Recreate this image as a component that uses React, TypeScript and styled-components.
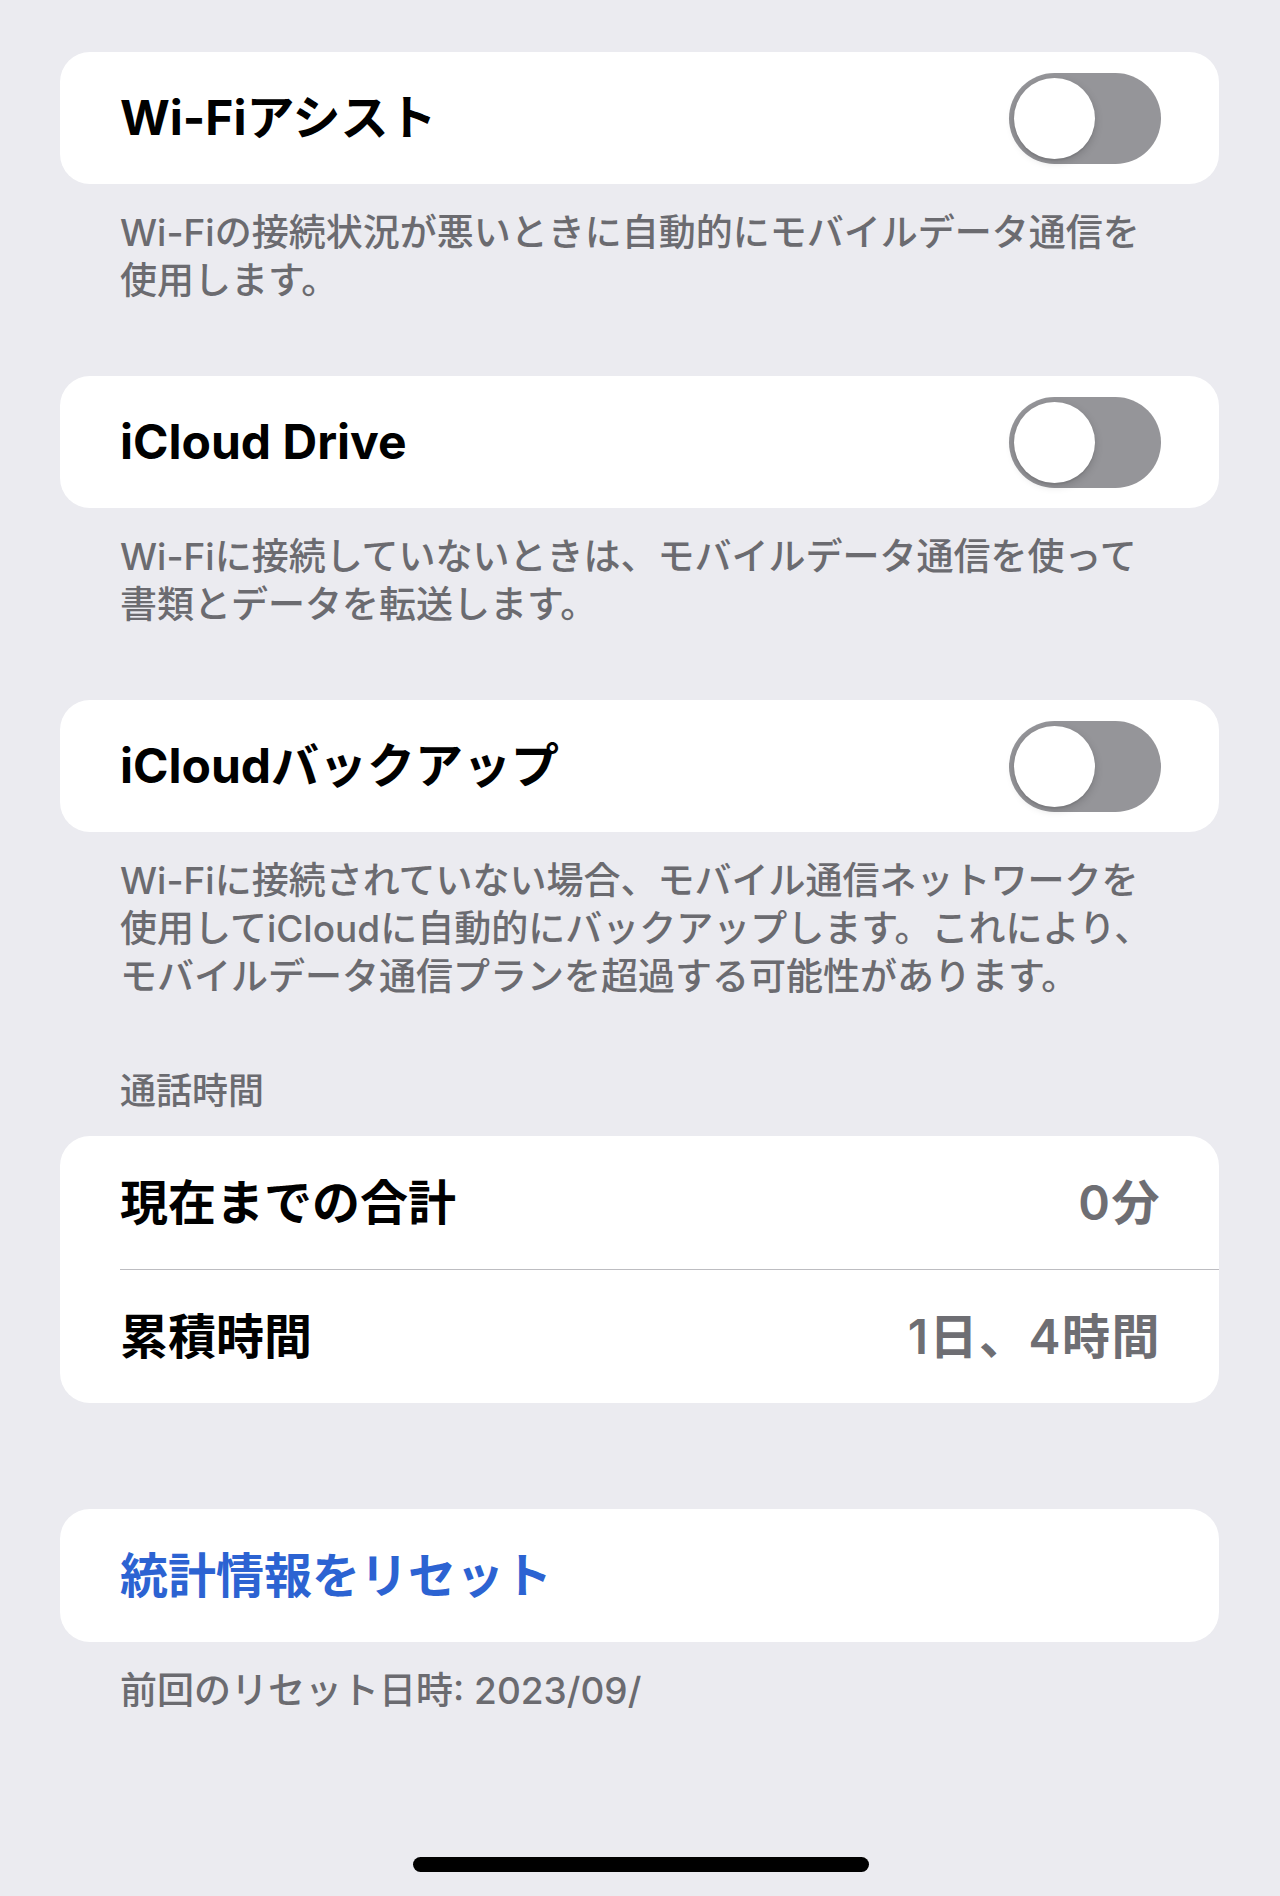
import React from 'react';
import styled, { createGlobalStyle } from 'styled-components';

const GlobalStyle = createGlobalStyle`
  html, body {
    margin: 0;
    padding: 0;
    background: #ebebf0;
  }
  body {
    font-family: Inter, "Noto Sans CJK JP", "Noto Sans", sans-serif;
    -webkit-font-smoothing: antialiased;
  }
`;

const Page = styled.div`
  min-height: 1896px;
  box-sizing: border-box;
  padding: 52px 61px 24px 60px;
  display: flex;
  flex-direction: column;
  background: #ebebf0;
`;

const Section = styled.section<{ $spacing?: number }>`
  display: flex;
  flex-direction: column;
  margin-top: ${({ $spacing }) => $spacing ?? 0}px;
`;

const Card = styled.div`
  background: #ffffff;
  border-radius: 30px;
  overflow: hidden;
  display: flex;
  flex-direction: column;
`;

const Row = styled.div<{ $height?: number }>`
  height: ${({ $height }) => $height ?? 132}px;
  display: flex;
  align-items: center;
  justify-content: space-between;
  padding: 0 58px 0 60px;
  box-sizing: border-box;
`;

const Separator = styled.div`
  height: 1px;
  margin-left: 60px;
  background: #bdbdc1;
`;

const Title = styled.span`
  font-size: 48px;
  font-weight: 700;
  color: #000000;
  line-height: 60px;
  white-space: nowrap;
`;

const LinkTitle = styled(Title)`
  color: #2c63d2;
`;

const Value = styled.span`
  font-size: 48px;
  font-weight: 600;
  color: #6e6e73;
  line-height: 60px;
  letter-spacing: 1.5px;
  white-space: nowrap;
`;

const Footer = styled.p`
  margin: 0;
  padding: 25px 20px 0 60px;
  font-size: 37px;
  font-weight: 500;
  line-height: 48px;
  color: #6b6b70;
`;

const Line = styled.span`
  display: block;
  white-space: nowrap;
`;

const Header = styled.div`
  padding: 0 60px 21px;
  font-size: 36px;
  font-weight: 500;
  line-height: 48px;
  color: #6b6b70;
`;

const Track = styled.div<{ $on?: boolean }>`
  width: 152px;
  height: 91px;
  border-radius: 46px;
  background: ${({ $on }) => ($on ? '#34c759' : '#959599')};
  padding: 5px;
  box-sizing: border-box;
  display: flex;
  justify-content: ${({ $on }) => ($on ? 'flex-end' : 'flex-start')};
  flex-shrink: 0;
`;

const Knob = styled.div`
  width: 81px;
  height: 81px;
  border-radius: 50%;
  background: #ffffff;
  box-shadow: 0 3px 8px rgba(0, 0, 0, 0.18), 0 2px 1px rgba(0, 0, 0, 0.06);
`;

const HomeIndicator = styled.div`
  align-self: center;
  width: 456px;
  height: 15px;
  border-radius: 8px;
  background: #000000;
  margin-top: 142px;
  margin-left: 2px;
`;

const Toggle: React.FC<{ on?: boolean }> = ({ on }) => (
  <Track $on={on}>
    <Knob />
  </Track>
);

const toggles = [
  {
    title: 'Wi-Fiアシスト',
    lines: ['Wi-Fiの接続状況が悪いときに自動的にモバイルデータ通信を', '使用します。'],
  },
  {
    title: 'iCloud Drive',
    lines: ['Wi-Fiに接続していないときは、モバイルデータ通信を使って', '書類とデータを転送します。'],
  },
  {
    title: 'iCloudバックアップ',
    lines: [
      'Wi-Fiに接続されていない場合、モバイル通信ネットワークを',
      '使用してiCloudに自動的にバックアップします。これにより、',
      'モバイルデータ通信プランを超過する可能性があります。',
    ],
  },
];

export default function App() {
  return (
    <>
      <GlobalStyle />
      <Page>
        {toggles.map((item, i) => (
          <Section key={item.title} $spacing={i === 0 ? 0 : 71}>
            <Card>
              <Row>
                <Title>{item.title}</Title>
                <Toggle />
              </Row>
            </Card>
            <Footer>
              {item.lines.map((l) => (
                <Line key={l}>{l}</Line>
              ))}
            </Footer>
          </Section>
        ))}

        <Section $spacing={66}>
          <Header>通話時間</Header>
          <Card>
            <Row $height={133}>
              <Title>現在までの合計</Title>
              <Value>0分</Value>
            </Row>
            <Separator />
            <Row $height={133}>
              <Title>累積時間</Title>
              <Value>1日、4時間</Value>
            </Row>
          </Card>
        </Section>

        <Section $spacing={106}>
          <Card>
            <Row $height={133}>
              <LinkTitle>統計情報をリセット</LinkTitle>
            </Row>
          </Card>
          <Footer>前回のリセット日時: 2023/09/</Footer>
        </Section>

        <HomeIndicator />
      </Page>
    </>
  );
}
